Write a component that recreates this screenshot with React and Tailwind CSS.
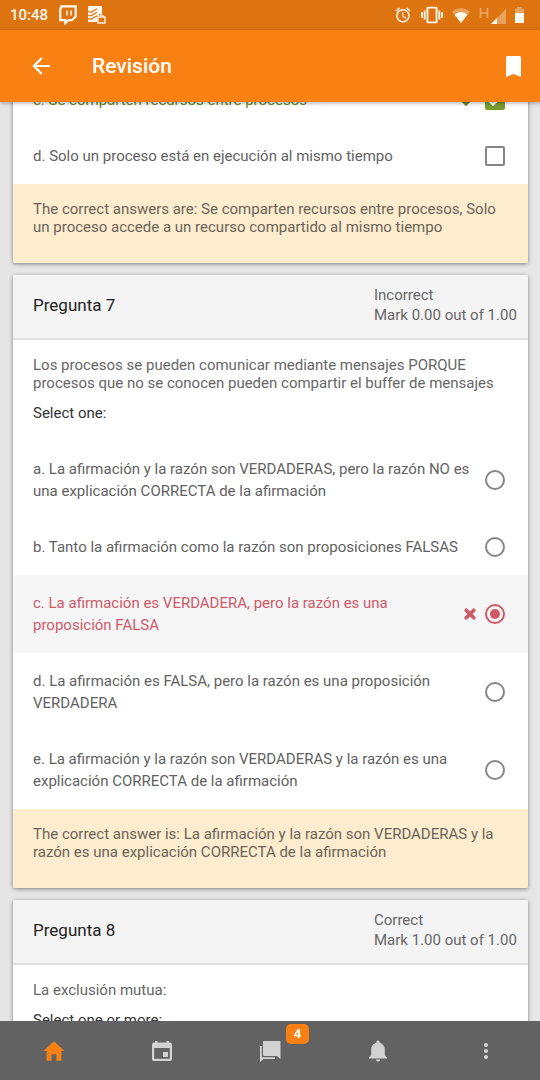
import { IoMdArrowBack, IoMdHome, IoMdNotifications, IoMdMore } from "react-icons/io";
import { FaCheck } from "react-icons/fa";
import { MdAlarm, MdVibration } from "react-icons/md";

function StatusBar() {
  return (
    <div className="flex h-[30px] shrink-0 items-center justify-between bg-[#de7410] px-[10px] text-[#fff8ee]">
      <div className="flex items-center gap-[11px]">
        <span className="text-[15px] font-medium leading-5">10:48</span>
        <svg width="18" height="20" viewBox="0 0 18 20" aria-hidden="true">
          <path d="M2.300 1.300H16.700V11.500L13 15.200H9.500L6.300 18V15.200H1.300V3.800z" fill="none" stroke="currentColor" strokeWidth="2.200" />
          <path d="M8 5.500v5M12 5.500v5" stroke="currentColor" strokeWidth="1.500" />
        </svg>
        <svg width="18" height="19" viewBox="0 0 18 19" aria-hidden="true">
          <path d="M1 0h12.500q.5 0 .5.5V8H11v2H9v6H1q-1 0-1-1V1q0-1 1-1z" fill="currentColor" />
          <path d="M0 5.500l3 .8 6-3.500M0 9l3 .8 6-3.500M0 12.500l3 .8 6-3.500" fill="none" stroke="#de7410" strokeWidth="1.200" />
          <rect x="10" y="11" width="7" height="6" fill="#de7410" stroke="currentColor" strokeWidth="1.400" />
          <path d="M12 10.500V9h3v1.500" fill="none" stroke="currentColor" />
        </svg>
      </div>
      <div className="flex items-center gap-[9px] pr-[6px]">
        <MdAlarm size={18} aria-hidden="true" />
        <MdVibration size={22} aria-hidden="true" />
        <svg width="18" height="15" viewBox="0 0 18 15" aria-hidden="true">
          <path d="M9 15L0 3.500Q9-3.500 18 3.500z" fill="currentColor" opacity=".35" />
          <path d="M9 15L2.500 6.500Q9 1.500 15.500 6.500z" fill="currentColor" />
        </svg>
        <svg width="27" height="17" viewBox="0 0 27 17" aria-hidden="true">
          <path d="M1.500 1v10M8.500 1v10M1.500 6h7" fill="none" stroke="currentColor" strokeWidth="1.600" opacity=".4" />
          <path d="M27 2v15H12z" fill="currentColor" opacity=".35" />
          <path d="M18 11v6h-6z" fill="currentColor" />
        </svg>
        <svg width="9" height="16" viewBox="0 0 9 16" aria-hidden="true">
          <path d="M0 2h2V0h5v2H9v4H0z" fill="currentColor" opacity=".35" />
          <path d="M0 6h9v10H0z" fill="currentColor" />
        </svg>
      </div>
    </div>
  );
}

function Option({ type, name, checked, state, children }) {
  const tone =
    state === "wrong" ? "bg-[#f6f6f6] text-[#cf5967]" : state === "right" ? "text-[#6d8a2f]" : "text-[#626262]";
  return (
    <label className={`flex items-center py-[17px] pl-5 pr-[23px] leading-[22px] ${tone}`}>
      <span className="min-w-0 flex-1">{children}</span>
      {state === "wrong" && (
        <svg className="mx-2 shrink-0" width="12" height="12" viewBox="0 0 12 12" aria-hidden="true">
          <path d="M2.200 2.200l7.600 7.600M9.800 2.200L2.200 9.800" stroke="currentColor" strokeWidth="3.600" strokeLinecap="round" />
        </svg>
      )}
      {state === "right" && <FaCheck className="mx-2 shrink-0" size={16} aria-hidden="true" />}
      {type === "radio" ? (
        <input
          type="radio"
          name={name}
          defaultChecked={checked}
          className="ml-px size-5 shrink-0 appearance-none rounded-full border-2 border-[#868686] p-[3px] checked:border-[#cf5967] checked:bg-[#cf5967] checked:bg-clip-content"
        />
      ) : (
        <span className="ml-px grid shrink-0">
          <input
            type="checkbox"
            name={name}
            defaultChecked={checked}
            className="col-start-1 row-start-1 size-5 appearance-none rounded-[2px] border-2 border-[#868686] checked:border-[#7a9a2f] checked:bg-[#7a9a2f]"
          />
          {checked && (
            <svg className="pointer-events-none col-start-1 row-start-1" width="20" height="20" viewBox="0 0 20 20" aria-hidden="true">
              <path d="M3.500 10l4.500 4.500 8.500-8.500" fill="none" stroke="#fff" strokeWidth="2.600" />
            </svg>
          )}
        </span>
      )}
    </label>
  );
}

function Feedback({ children }) {
  return <p className="bg-[#feeccf] px-5 pb-[27px] pt-4 leading-[18px] text-[#6a6459]">{children}</p>;
}

function Card({ children }) {
  return <section className="overflow-hidden rounded-[2px] bg-white shadow-[0_1px_4px_rgba(0,0,0,0.45)]">{children}</section>;
}

function QuestionHeader({ title, status, mark }) {
  return (
    <header className="flex items-center justify-between border-b-2 border-[#dedede] bg-[#f4f4f4] pb-[13px] pl-5 pr-[10px] pt-[10px]">
      <h2 className="text-[17px] leading-5 text-[#222]">{title}</h2>
      <div className="w-36 leading-5 text-[#666]">
        <p>{status}</p>
        <p className="whitespace-nowrap">{mark}</p>
      </div>
    </header>
  );
}

function Tab({ label, active, children }) {
  return (
    <a
      href="#"
      aria-label={label}
      className={`flex flex-1 items-center justify-center ${active ? "text-[#f98012]" : "text-[#d2d2d2]"}`}
    >
      {children}
    </a>
  );
}

export default function App() {
  return (
    <div className="flex h-screen flex-col overflow-hidden bg-[#e6e6e6] font-[Roboto,sans-serif] text-[15px]">
      <StatusBar />
      <header className="z-10 flex h-[72px] shrink-0 items-center bg-[#f98012] pl-7 pr-[19px] text-white shadow-[0_1px_4px_rgba(0,0,0,0.35)]">
        <button type="button" aria-label="Back">
          <IoMdArrowBack size={26} />
        </button>
        <h1 className="ml-[38px] flex-1 text-[21px] font-medium leading-7">Revisión</h1>
        <button type="button" aria-label="Bookmark">
          <svg width="15" height="21" viewBox="0 0 15 21" aria-hidden="true">
            <path d="M1.500 0h12Q15 0 15 1.500V21l-7.500-3L0 21V1.500Q0 0 1.500 0z" fill="currentColor" />
          </svg>
        </button>
      </header>

      <main className="min-h-0 flex-1 overflow-hidden">
        <div className="-mt-[30px] flex flex-col gap-3 pl-[13px] pr-3">
          <Card>
            <Option type="checkbox" name="q6c" checked state="right">c. Se comparten recursos entre procesos</Option>
            <Option type="checkbox" name="q6d">d. Solo un proceso está en ejecución al mismo tiempo</Option>
            <Feedback>
              The correct answers are: Se comparten recursos entre procesos, Solo un proceso accede a un recurso
              compartido al mismo tiempo
            </Feedback>
          </Card>

          <Card>
            <QuestionHeader title="Pregunta 7" status="Incorrect" mark="Mark 0.00 out of 1.00" />
            <div className="px-5 pb-[19px] pt-4 leading-[18px]">
              <p className="text-[#666]">
                Los procesos se pueden comunicar mediante mensajes PORQUE procesos que no se conocen pueden compartir
                el buffer de mensajes
              </p>
              <p className="mt-3 text-[#333]">Select one:</p>
            </div>
            <Option type="radio" name="q7">
              a. La afirmación y la razón son VERDADERAS, pero la razón NO es una explicación CORRECTA de la afirmación
            </Option>
            <Option type="radio" name="q7">b. Tanto la afirmación como la razón son proposiciones FALSAS</Option>
            <Option type="radio" name="q7" checked state="wrong">
              c. La afirmación es VERDADERA, pero la razón es una proposición FALSA
            </Option>
            <Option type="radio" name="q7">
              d. La afirmación es FALSA, pero la razón es una proposición VERDADERA
            </Option>
            <Option type="radio" name="q7">
              e. La afirmación y la razón son VERDADERAS y la razón es una explicación CORRECTA de la afirmación
            </Option>
            <Feedback>
              The correct answer is: La afirmación y la razón son VERDADERAS y la razón es una explicación CORRECTA de
              la afirmación
            </Feedback>
          </Card>

          <Card>
            <QuestionHeader title="Pregunta 8" status="Correct" mark="Mark 1.00 out of 1.00" />
            <div className="px-5 pb-[19px] pt-4 leading-[18px]">
              <p className="text-[#666]">La exclusión mutua:</p>
              <p className="mt-3 text-[#333]">Select one or more:</p>
            </div>
          </Card>
        </div>
      </main>

      <nav className="z-10 flex h-[59px] shrink-0 bg-[#626262]">
        <Tab label="Home" active>
          <IoMdHome size={26} />
        </Tab>
        <Tab label="Calendar">
          <svg width="20" height="20" viewBox="0 0 20 20" aria-hidden="true">
            <path
              fillRule="evenodd"
              d="M3 0h2.500v1.500h9V0H17v1.500h1Q20 1.500 20 3.500V18q0 2-2 2H2q-2 0-2-2V3.500Q0 1.500 2 1.500h1zM2.200 7v10.800h15.600V7z"
              fill="currentColor"
            />
            <rect x="11" y="11" width="5" height="5" fill="currentColor" />
          </svg>
        </Tab>
        <Tab label="Messages">
          <span className="relative">
            <svg width="22" height="22" viewBox="0 0 22 22" aria-hidden="true">
              <path d="M5 1h15.500q1 0 1 1v17l-3.500-3H5q-1 0-1-1V2q0-1 1-1z" fill="currentColor" />
              <path d="M1 6h1.800v11.200H16V19H4.500L1 22z" fill="currentColor" />
            </svg>
            <span className="absolute -top-4 left-[27px] flex h-5 w-[23px] items-center justify-center rounded-[5px] bg-[#f98012] text-[13px] font-bold text-white">
              4
            </span>
          </span>
        </Tab>
        <Tab label="Notifications">
          <IoMdNotifications size={26} />
        </Tab>
        <Tab label="More">
          <IoMdMore size={26} />
        </Tab>
      </nav>
    </div>
  );
}
